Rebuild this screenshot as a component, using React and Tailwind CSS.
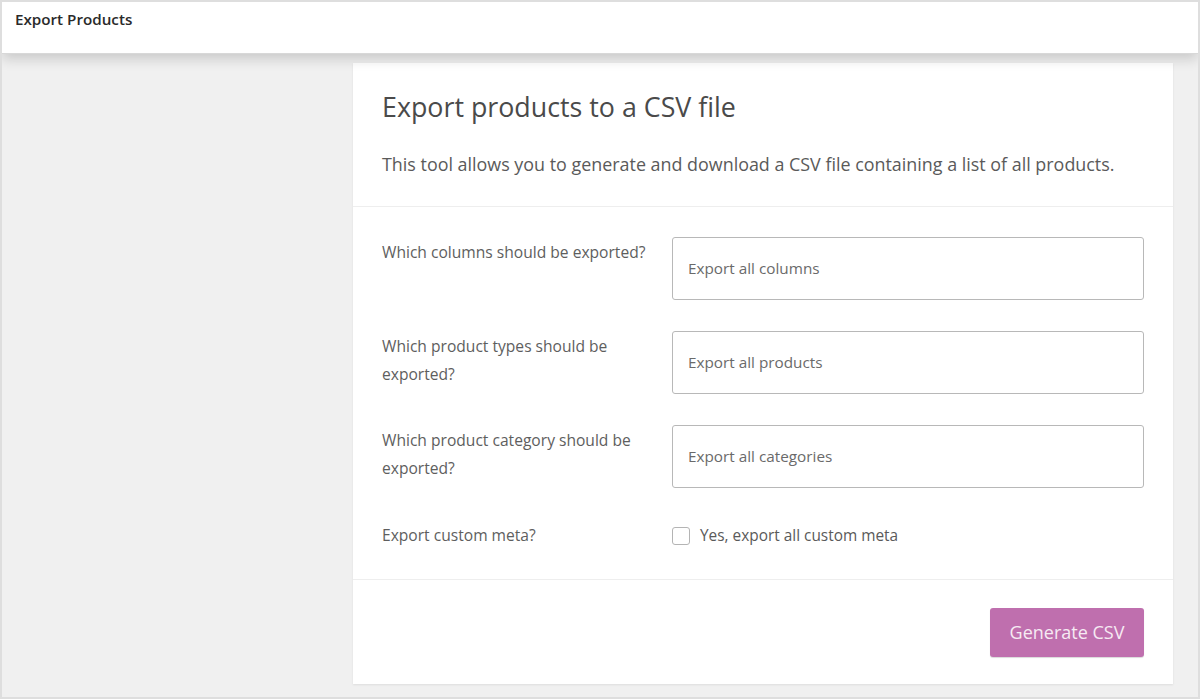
import { useState } from 'react'

const font = { fontFamily: '"Open Sans", "Noto Sans", sans-serif' }

function SelectRow({ label, placeholder }) {
    return (
        <div className="flex items-start">
            <label className="w-[290px] pt-[1px] pr-4 text-[15.6px] leading-[28px] text-[#5e5e5e]">
                {label}
            </label>
            <div className="w-[472px] h-[63px] flex items-center px-[15px] border border-[#b8b8b8] rounded-[3px] bg-white text-[15.3px] text-[#6a6a6a]">
                {placeholder}
            </div>
        </div>
    )
}

export default function App() {
    const [meta, setMeta] = useState(false)

    return (
        <div style={font} className="w-full h-[699px] bg-[#f0f0f0] border-2 border-[#dedede] flex flex-col overflow-hidden">
            {/* Top bar */}
            <header className="h-[52px] shrink-0 bg-white border-b border-[#d8d8d8] shadow-[0_5px_12px_rgba(0,0,0,0.16)] px-[13px] pt-[6px] relative z-10">
                <h1 className="text-[15.2px] font-semibold text-[#2a2a2a]">Export Products</h1>
            </header>

            <div className="flex-1 flex pt-[9px] pl-[351px]">
                <div className="w-[820px] h-[621px] bg-white shadow-[0_1px_2px_rgba(0,0,0,0.08)] flex flex-col">
                    <div className="px-[29px] pt-[26px] pb-[28px] border-b border-[#eeeeee]">
                        <h2 className="text-[26.8px] leading-[36px] text-[#4a4a4a]">Export products to a CSV file</h2>
                        <p className="mt-[25px] text-[17.9px] leading-[28px] text-[#5a5a5a]">
                            This tool allows you to generate and download a CSV file containing a list of all products.
                        </p>
                    </div>

                    <div className="px-[29px] pt-[30px] pb-[30px] flex flex-col gap-[31px] border-b border-[#eeeeee]">
                        <SelectRow label="Which columns should be exported?" placeholder="Export all columns" />
                        <SelectRow label="Which product types should be exported?" placeholder="Export all products" />
                        <SelectRow label="Which product category should be exported?" placeholder="Export all categories" />
                        <div className="flex items-start pt-[2px]">
                            <label className="w-[290px] pr-4 text-[15.6px] leading-[28px] text-[#5e5e5e]">Export custom meta?</label>
                            <label className="flex items-center gap-[10px] pt-[3px] text-[15.4px] text-[#5a5a5a] cursor-pointer">
                                <input
                                    type="checkbox"
                                    checked={meta}
                                    onChange={(e) => setMeta(e.target.checked)}
                                    className="appearance-none w-[18px] h-[18px] border border-[#b4b4b4] rounded-[3px] bg-white"
                                />
                                Yes, export all custom meta
                            </label>
                        </div>
                    </div>

                    <div className="flex justify-end px-[29px] pt-[28px]">
                        <button className="w-[154px] h-[49px] rounded-[3px] bg-[#bf6fae] text-[#f6eaf3] text-[18px] shadow-[0_1px_1px_rgba(0,0,0,0.15)]">
                            Generate CSV
                        </button>
                    </div>
                </div>
            </div>
        </div>
    )
}
